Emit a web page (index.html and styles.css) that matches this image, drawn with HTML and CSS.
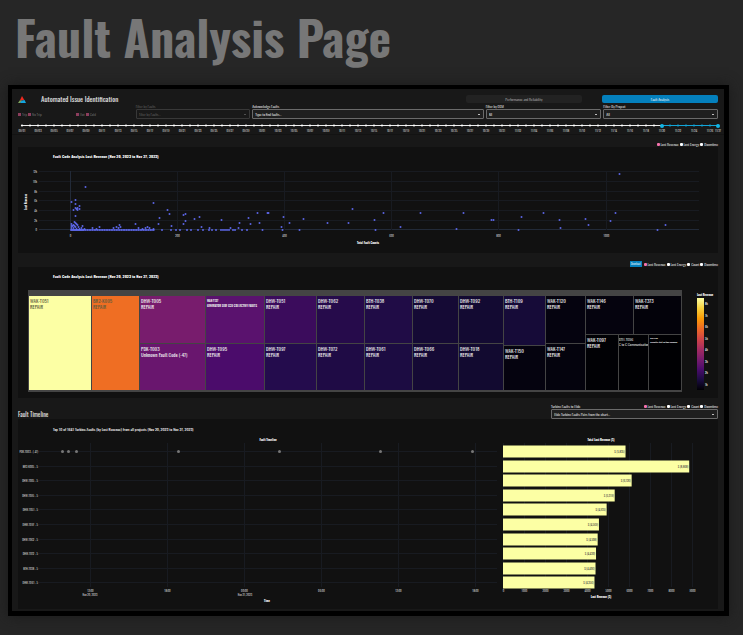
FILE: index.html
```html
<!DOCTYPE html>
<html lang="en">
<head>
<meta charset="utf-8">
<title>Fault Analysis Page</title>
<link rel="stylesheet" href="styles.css">
</head>
<body>
<h1 class="page-title">Fault Analysis Page</h1>
<main class="frame">
  <header class="top">
    <div class="top-row">
      <svg class="logo" viewBox="0 0 14 12" aria-hidden="true">
        <path d="M7 0 L11 7 L3 8 Z" fill="#f02a20"/>
        <path d="M3 7.6 L7 7.6 L4 12 L0 12 Z" fill="#7fa860"/>
        <path d="M6 8 L11.4 7 L14 12 L3.6 12 Z" fill="#12a5e0"/>
      </svg>
      <h2 class="app-title">Automated Issue Identification</h2>
      <nav class="tabs">
        <button class="tab" type="button">Performance and Reliability</button>
        <button class="tab active" type="button">Fault Analysis</button>
      </nav>
    </div>
    <div class="filters">
      <div class="checks">
        <div class="check-group">
          <label><input type="checkbox" checked>Trip</label>
          <label><input type="checkbox" checked>No Trip</label>
        </div>
        <div class="check-group">
          <label><input type="checkbox" checked>Hot</label>
          <label><input type="checkbox" checked>Cold</label>
        </div>
      </div>
      <div class="field dim"><label for="f1">Filter by Faults</label><div class="pick"><select id="f1"><option>Filter by Faults...</option></select></div></div>
      <div class="field"><label for="f2">Acknowledge Faults</label><div class="pick"><select id="f2"><option>Type to find faults...</option></select></div></div>
      <div class="field"><label for="f3">Filter by OEM</label><div class="pick"><select id="f3"><option>All</option></select></div></div>
      <div class="field"><label for="f4">Filter By Project</label><div class="pick"><select id="f4"><option>All</option></select></div></div>
    </div>
    <div class="range">
      <svg id="range" class="chart" viewBox="0 0 700 15"></svg>
      <input class="handle" type="range" min="0" max="87" value="80" aria-label="Start date">
      <input class="handle" type="range" min="0" max="87" value="87" aria-label="End date">
    </div>
  </header>

  <div class="options">
    <label><input type="radio" name="m1" checked>Lost Revenue</label>
    <label><input type="radio" name="m1">Lost Energy</label>
    <label><input type="radio" name="m1">Downtime</label>
  </div>
  <section class="card"><svg id="scatter" class="chart" viewBox="0 0 700 106"></svg></section>

  <div class="options second">
    <button class="download" type="button">Download</button>
    <label><input type="radio" name="m2" checked>Lost Revenue</label>
    <label><input type="radio" name="m2">Lost Energy</label>
    <label><input type="radio" name="m2">Count</label>
    <label><input type="radio" name="m2">Downtime</label>
  </div>
  <section class="card tree-card">
    <h3 class="chart-title">Fault Code Analysis Lost Revenue (Nov 20, 2023 to Nov 27, 2023)</h3>
    <div class="tree-row">
      <div id="tree" class="tree"></div>
      <div class="scale">
        <div class="scale-title">Lost Revenue</div>
        <div class="scale-body">
          <div class="scale-bar"></div>
          <div class="scale-ticks"><span>8k</span><span>7k</span><span>6k</span><span>5k</span><span>4k</span><span>3k</span><span>2k</span><span>1k</span></div>
        </div>
      </div>
    </div>
  </section>

  <div class="timeline-head">
    <h2 class="section-title">Fault Timeline</h2>
    <div class="hide-box">
      <div class="hide-top">
        <label for="f5">Turbine Faults to Hide</label>
        <div class="options inline">
          <label><input type="radio" name="m3" checked>Lost Revenue</label>
          <label><input type="radio" name="m3">Lost Energy</label>
          <label><input type="radio" name="m3">Count</label>
          <label><input type="radio" name="m3">Downtime</label>
        </div>
      </div>
      <div class="pick"><select id="f5"><option>Hide Turbine Faults Pairs from the chart...</option></select></div>
    </div>
  </div>
  <section class="card"><svg id="timeline" class="chart" viewBox="0 0 700 190"></svg></section>
</main>
<script src="charts.js"></script>
</body>
</html>
```
FILE: styles.css
```css
* { box-sizing: border-box; }

body {
  margin: 0;
  padding: 0 14px 18px 8px;
  background: #262626;
  color: #fff;
  font-family: Oswald, "Liberation Sans Narrow", "Roboto Condensed", "Liberation Sans", sans-serif;
  font-size: 4px;
  font-weight: 300;
  line-height: 5px;
}

h1, h2, h3 { margin: 0; }

.page-title {
  padding: 0 7px;
  color: #777;
  font-size: 48px;
  font-weight: 700;
  line-height: 74px;
  height: 85px;
  white-space: nowrap;
}

.frame {
  padding: 0 6px 2px;
  border: 4px solid #000;
  border-width: 4px 5px 5px 4px;
  background: #181818;
  box-shadow: 0 0 12px #1a1a1a;
}

.top {
  margin: 0 -6px;
  padding: 5px 6px 0;
  border-bottom: 1px solid #131313;
}

.top-row {
  display: flex;
  align-items: center;
  height: 10px;
}

.logo { flex: none; width: 8px; height: 7px; }

.app-title {
  flex: 1;
  padding-left: 15px;
  color: #e4e4e4;
  font-size: 7px;
  font-weight: 400;
  line-height: 10px;
}

.tabs {
  display: flex;
  justify-content: space-between;
  width: 36%;
}

.tab {
  width: 46%;
  height: 8px;
  padding: 0;
  border: 0;
  border-radius: 2px;
  background: #222;
  color: #bbb;
  font: inherit;
}

.tab.active { background: #0480bd; color: #fff; }

.filters {
  display: grid;
  grid-template-columns: 116fr 115fr 232fr 116fr 115fr;
  gap: 2px;
}

.checks {
  display: grid;
  grid-template-columns: 1fr 1fr;
  padding-top: 5px;
  color: #777;
}

.check-group { display: flex; gap: 1px; }

.check-group label,
.options label {
  display: flex;
  align-items: center;
  gap: 1px;
  white-space: nowrap;
}

input[type="checkbox"],
input[type="radio"] {
  appearance: none;
  width: 3px;
  height: 3px;
  margin: 0;
  background: #fff;
}

input[type="radio"] { border-radius: 1px; }
input[type="radio"]:checked { background: #f573ad; }
input[type="checkbox"]:checked { background: #8c3d5c; }

.field label { display: block; }
.field.dim { color: #666; }

.pick { position: relative; }

.pick::after {
  content: "";
  position: absolute;
  right: 4px;
  top: 5px;
  width: 2px;
  height: 1px;
  background: currentColor;
  opacity: 0.7;
}

select {
  appearance: none;
  display: block;
  width: 100%;
  height: 10px;
  padding: 0 2px;
  border: 1px solid #6a6a6a;
  border-radius: 1px;
  background: #1f1f1f;
  color: inherit;
  font: inherit;
}

.dim select { border-color: #383838; background: #191919; }

.range { position: relative; }

.handle {
  appearance: none;
  position: absolute;
  left: 2px;
  top: 4px;
  width: 100%;
  height: 5px;
  margin: 0;
  background: none;
  pointer-events: none;
}

.handle::-webkit-slider-thumb {
  appearance: none;
  width: 4px;
  height: 4px;
  border-radius: 50%;
  background: #12b5e5;
  pointer-events: auto;
}

.chart { display: block; width: 100%; overflow: visible; }

.options {
  display: flex;
  justify-content: flex-end;
  align-items: center;
  gap: 1px;
  height: 6px;
  margin-top: 6px;
}

.options.second { margin-top: 8px; }
.options.inline { margin: 0; height: 5px; }

.download {
  height: 6px;
  margin-right: 1px;
  padding: 0 1px;
  border: 0;
  background: #0480bd;
  color: #fff;
  font: inherit;
  font-size: 3px;
  line-height: 6px;
}

.card { background: #111; }

.tree-card { padding: 7px 6px 6px 10px; }

.chart-title {
  padding-left: 25px;
  font-size: 4px;
  line-height: 5px;
}

.tree-row {
  display: flex;
  gap: 15px;
  margin-top: 11px;
}

.tree {
  flex: 1;
  display: flex;
  gap: 1px;
  height: 102px;
  padding: 6px 1px 2px;
  background: #444;
}

.tree-col { display: flex; flex-direction: column; gap: 1px; min-width: 0; }
.tree-line { display: flex; gap: 1px; min-height: 0; }

.cell {
  min-width: 0;
  min-height: 0;
  padding: 2px 1px;
  overflow: hidden;
  color: #eee;
  font-size: 5px;
  font-weight: 400;
  line-height: 6px;
  white-space: nowrap;
}

.cell.dark { color: #5c5c40; }
.cell.small { padding: 2px 0; color: #fff; font-size: 4px; font-weight: 300; line-height: 5px; }
.cell.compact { font-size: 3px; font-weight: 600; line-height: 5px; }
.cell.tiny { font-size: 2px; font-weight: 600; line-height: 4px; }

.scale { width: 15px; }
.scale-title { font-size: 3px; font-weight: 700; white-space: nowrap; margin-top: 2px; }
.scale-body { display: flex; gap: 1px; height: 92px; margin-top: 1px; }

.scale-bar {
  width: 7px;
  background: linear-gradient(to top, #000004, #1b0c41, #4a0c6b, #781c6d, #a52c60, #cf4446, #ed6925, #fb9b06, #f7d13d, #fcffa4);
}

.scale-ticks {
  display: flex;
  flex-direction: column;
  justify-content: space-between;
  padding: 3px 0;
  font-size: 3px;
  font-weight: 400;
}

.timeline-head {
  display: flex;
  justify-content: space-between;
  align-items: flex-end;
  margin-top: 6px;
}

.section-title {
  color: #e4e4e4;
  font-size: 6px;
  font-weight: 400;
  line-height: 8px;
}

.hide-box { width: 167px; }
.hide-top { display: flex; justify-content: space-between; }

svg text { fill: #ccc; font-size: 3px; font-weight: 400; }
svg .title { fill: #fff; font-size: 4px; font-weight: 700; }
svg .title.long { font-weight: 400; }
svg .axis { fill: #fff; font-size: 3px; font-weight: 700; }
svg .value { fill: #444; }
svg .mid { text-anchor: middle; }
svg .end { text-anchor: end; }
svg .grid { stroke: #181b21; stroke-width: 1; }
svg .zero { stroke: #222a38; }
svg .dot { fill: #636efa; opacity: 0.9; }
svg .bar { fill: #fcffa4; }
svg .mark { fill: #777; }
```
FILE: charts.js
```js
const line = (x1, y1, x2, y2, cls = "grid") =>
  `<line class="${cls}" x1="${x1}" y1="${y1}" x2="${x2}" y2="${y2}"/>`;
const text = (x, y, s, cls = "mid") => `<text class="${cls}" x="${x}" y="${y}">${s}</text>`;
const dot = (x, y, r = 1) => `<circle class="dot" cx="${x}" cy="${y}" r="${r}"/>`;

// Date range, 1 September to 27 November, one tick a day
(() => {
  let s = '<rect x="4" y="6" width="640" height="1" fill="#eee"/><rect x="643" y="6" width="57" height="1" fill="#12a5d8"/>';
  for (let d = 0; d <= 87; d++) {
    const x = 4 + d * 8;
    s += `<circle cx="${x}" cy="6.5" r="1.1" fill="${d < 80 ? "#fff" : "#12a5d8"}"/>`;
    if (d % 2 === 0 || d === 87) {
      const t = new Date(2023, 8, 1 + d);
      const label = String(t.getMonth() + 1).padStart(2, "0") + "/" + String(t.getDate()).padStart(2, "0");
      s += text(x, 13, label);
    }
  }
  document.getElementById("range").innerHTML = s;
})();

// Scatter of lost revenue against fault count
(() => {
  let s = text(35, 11, "Fault Code Analysis Lost Revenue (Nov 20, 2023 to Nov 27, 2023)", "title");
  ["12k", "10k", "8k", "6k", "4k", "2k", "0"].forEach((l, i) => {
    const y = [25, 35, 45, 54, 64, 74, 83][i];
    s += line(21, y - 0.5, 681, y - 0.5, l === "0" ? "grid zero" : "grid") + text(19, y + 1, l, "end");
  });
  [0, 200, 400, 600, 800, 1000].forEach((v, i) => {
    const x = [52, 159, 266, 373, 480, 588][i] + 0.5;
    s += line(x, 24, x, 83, v ? "grid" : "grid zero") + text(x, 90, v);
  });
  s += text(350, 97, "Total Fault Counts", "axis mid");
  s += '<text class="axis mid" transform="translate(9 55) rotate(-90)">Lost Revenue</text>';
  const pts = [
    67,40, 53,55, 57,53, 57,57, 61,59, 55,63, 57,61, 59,61, 59,63, 61,62, 58,62, 57,69, 56,75, 57,76,
    135,56, 149,63, 151,67, 141,71, 140,77, 117,77, 101,78, 81,80, 64,79, 165,68, 167,67, 167,74, 165,77,
    176,72, 181,70, 203,73, 221,76, 230,71, 232,77, 239,66, 241,76, 183,80, 191,81, 153,79, 212,81, 220,81,
    244,83, 249,66, 250,66, 265,70, 263,80, 264,83, 271,76, 281,83, 285,72, 309,76, 330,76, 334,62, 356,73,
    357,83, 365,66, 382,80, 402,66, 438,82, 445,66, 473,73, 475,73, 500,83, 503,70, 525,66, 541,73, 542,81,
    567,72, 570,78, 592,74, 597,66, 601,27, 639,83, 647,78,
    53,77, 54,79, 53,79, 56,79, 55,78, 58,77, 59,78, 57,80, 60,80, 53,81, 55,81, 58,82, 61,82, 63,81,
    66,82, 74,81, 78,82, 95,81, 98,80, 100,81, 102,80, 120,81, 124,82, 127,81, 129,80, 131,81, 135,82
  ];
  for (let i = 0; i < pts.length; i += 2) s += dot(pts[i] + 0.5, pts[i + 1]);
  for (let x = 53; x < 137; x += x < 66 ? 1 : 1.7) s += dot(x, 83);
  [144, 153, 158, 162, 169, 173, 180, 185, 191, 194, 198, 203, 205, 207, 209, 211, 215, 217, 224, 229]
    .forEach(x => { s += dot(x, 83); });
  document.getElementById("scatter").innerHTML = s;
})();

// Treemap columns: [width, [height, name, fault, colour, style], ...]
(() => {
  const R = "REPAIR";
  const cols = [
    [62, [94, "WAK-T051", R, "#fcffa4", "dark"]],
    [47, [94, "BR2-K005", R, "#ef6e23", "dark"]],
    [65, [48, "DHW-T005", R, "#781c6d"], [46, "PDK-T003", "Unknown Fault Code (-47)", "#69166e"]],
    [58, [48, "WAK-T137", "GENERATOR SIDE CCU COLLECTIVE FAULTS", "#5a126e", "compact"], [46, "DHW-T095", R, "#4b0c6b"]],
    [51, [48, "DHW-T051", R, "#3b0c5c"], [46, "DHW-T097", R, "#240c4d"]],
    [47, [47, "DHW-T062", R, "#260b4b"], [47, "DHW-T072", R, "#1f0b45"]],
    [47, [47, "BTH-T038", R, "#200c46"], [47, "DHW-T061", R, "#1c0c42"]],
    [45, [47, "DHW-T070", R, "#150a35"], [47, "DHW-T066", R, "#150a35"]],
    [44, [47, "DHW-T092", R, "#130a32"], [47, "DHW-T018", R, "#120a30"]],
    [41, [49, "BTH-T109", R, "#160b38"], [44, "WAK-T150", R, "#05030f"]],
    [39, [47, "WAK-T120", R, "#05030f"], [47, "WAK-T147", R, "#04030d"]]
  ];
  const cell = (size, name, fault, color, cls = "") =>
    `<div class="cell ${cls}" style="flex:${size} 1 0;background:${color}">${name}<br>${fault}</div>`;
  let s = cols.map(([w, ...cells]) =>
    `<div class="tree-col" style="flex:${w} 1 0">${cells.map(c => cell(...c)).join("")}</div>`).join("");
  s += '<div class="tree-col" style="flex:95 1 0">' +
    '<div class="tree-line" style="flex:38 1 0">' + cell(47, "WAK-T146", R, "#05030e") + cell(47, "WAK-T373", R, "#03020a") + "</div>" +
    '<div class="tree-line" style="flex:56 1 0">' + cell(31, "WAK-T097", R, "#010105") +
    cell(31, "BTH-T096", "C to C Communication", "#010104", "small") +
    cell(31, "BTH-T106", "Converter start-up time exceeded", "#000003", "tiny") + "</div></div>";
  document.getElementById("tree").innerHTML = s;
})();

// Fault timeline beside the total per turbine fault
(() => {
  let s = text(35, 12, "Top 10 of 1641 Turbine-Faults (by Lost Revenue) from all projects (Nov 20, 2023 to Nov 27, 2023)", "title long");
  s += text(250, 22, "Fault Timeline", "axis mid") + text(583, 22, "Total Lost Revenue ($)", "axis mid");
  ["12:00", "18:00", "00:00", "06:00", "12:00", "18:00"].forEach((l, i) => {
    const x = 72.5 + i * 77;
    s += line(x, 24, x, 168) + text(x, 173, l);
  });
  s += text(72, 177, "Nov 20, 2023") + text(227, 177, "Nov 21, 2023") + text(249, 183, "Time", "axis mid");
  for (let i = 0; i <= 9; i++) {
    const x = 485.5 + i * 21;
    s += line(x, 24, x, 168) + text(x, 173, i ? i + "000" : "0");
  }
  s += text(583, 179, "Lost Revenue ($)", "axis mid");
  const rows = [
    ["PDK-T003 - (-47)", 5835], ["BR2-K005 - 5", 8868], ["DHW-T005 - 5", 6126], ["DHW-T095 - 5", 5319],
    ["DHW-T051 - 5", 4935], ["DHW-T097 - 5", 4569], ["DHW-T062 - 5", 4508], ["DHW-T072 - 5", 4430],
    ["BTH-T038 - 5", 4406], ["DHW-T061 - 5", 4356]
  ];
  rows.forEach(([name, v], i) => {
    const y = Math.round(32 + i * 14.6) + 0.5, w = v * 0.021;
    s += line(20, y, 479, y) + text(20, y + 1, name, "end");
    s += `<rect class="bar" x="485" y="${y - 6}" width="${w}" height="12"/>`;
    s += text(484 + w, y + 1, "$ (" + v.toLocaleString("en-US") + ")", "value end");
  });
  [44, 50, 58, 160, 261, 362, 454].forEach(x => {
    s += `<circle class="mark" cx="${x + 0.5}" cy="32.5" r="1.5"/>`;
  });
  document.getElementById("timeline").innerHTML = s;
})();
```
